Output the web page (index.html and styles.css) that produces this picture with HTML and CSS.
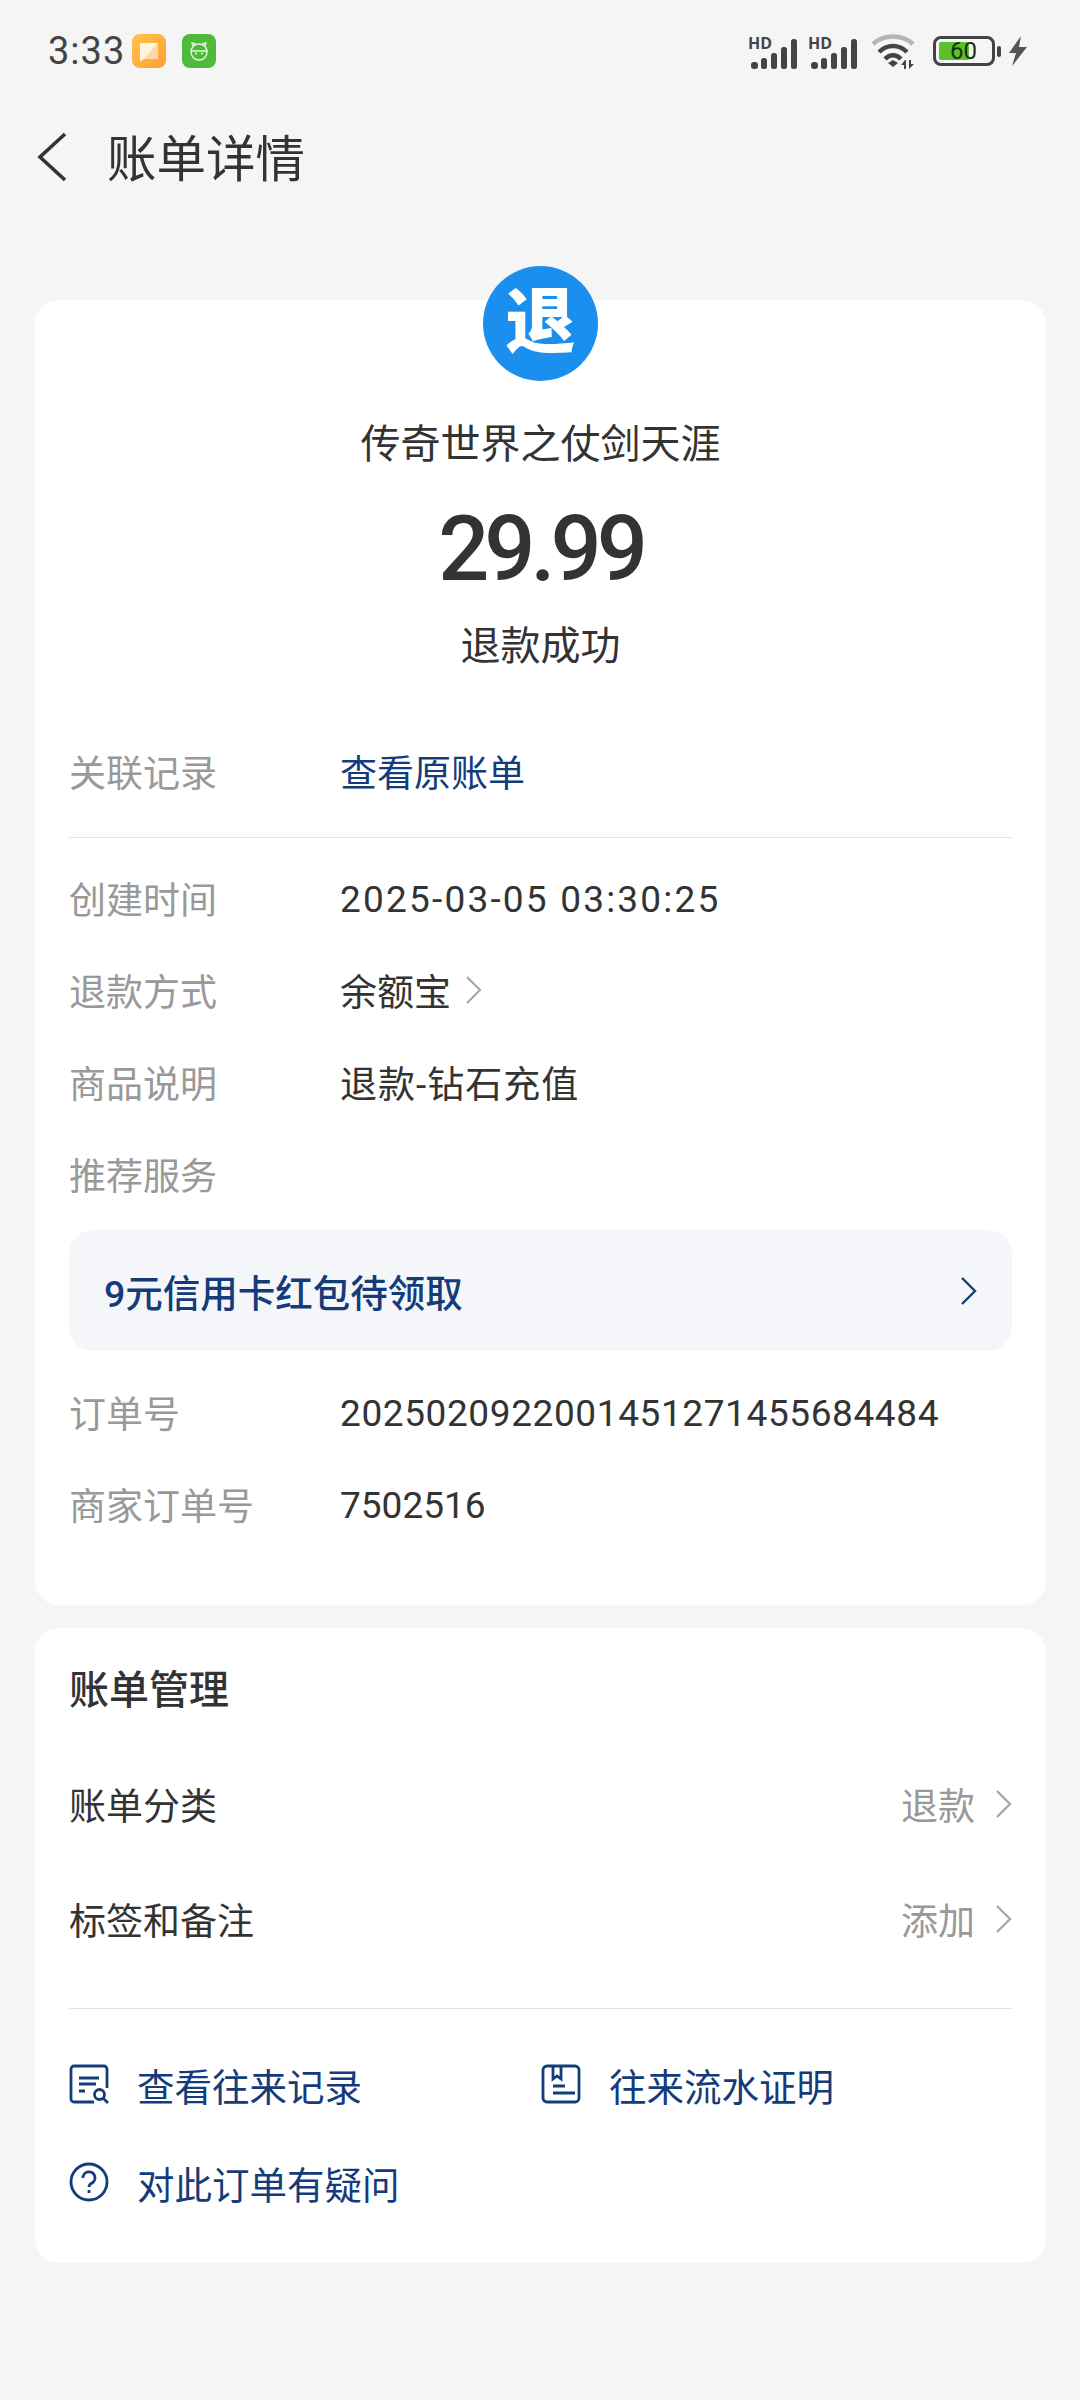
FILE: index.html
```html
<!DOCTYPE html>
<html lang="zh-CN">
<head>
  <meta charset="UTF-8" />
  <meta name="viewport" content="width=device-width, initial-scale=1.0"/>
  <title>账单详情</title>
  <link rel="stylesheet" href="styles.css">
</head>
<body>
  <div class="status-bar">
    <div class="status-left">
      <span class="clock">3:33</span>
      <svg class="app-icon" width="34" height="34" viewBox="0 0 34 34">
        <defs>
          <linearGradient id="orange" x1="0" y1="0" x2="1" y2="1">
            <stop offset="0" stop-color="#ffc44d"/>
            <stop offset="1" stop-color="#ff9f30"/>
          </linearGradient>
        </defs>
        <rect width="34" height="34" rx="8" fill="url(#orange)"/>
        <path d="M8 9h18v16H12l-4 3z" fill="#fff4e2"/>
        <path d="M26 9v16H12z" fill="#fcd9a6"/>
      </svg>
      <svg class="app-icon second" width="34" height="34" viewBox="0 0 34 34">
        <rect width="34" height="34" rx="8" fill="#4fb93a"/>
        <circle cx="17" cy="18" r="8" fill="none" stroke="#e6f7e0" stroke-width="1.4"/>
        <path d="M11 12l-1-3 4 1M23 12l1-3-4 1M9 17h16" fill="none" stroke="#e6f7e0" stroke-width="1.4"/>
        <path d="M13 19.500h2M19 19.500h2" stroke="#e6f7e0" stroke-width="1.4"/>
      </svg>
    </div>
    <div class="status-right">
      <svg width="52" height="40" viewBox="0 0 52 40">
        <text x="0" y="18" class="hd">HD</text>
        <rect x="3" y="31" width="7" height="7" rx="3" class="bar"/>
        <rect x="13" y="27" width="6" height="11" rx="2.500" class="bar"/>
        <rect x="23" y="22" width="6" height="16" rx="2.500" class="bar"/>
        <rect x="33" y="16" width="6" height="22" rx="2.500" class="bar"/>
        <rect x="43" y="8" width="6" height="30" rx="2.500" class="bar"/>
      </svg>
      <svg class="signal" width="52" height="40" viewBox="0 0 52 40">
        <text x="0" y="18" class="hd">HD</text>
        <rect x="3" y="31" width="7" height="7" rx="3" class="bar"/>
        <rect x="13" y="27" width="6" height="11" rx="2.500" class="bar"/>
        <rect x="23" y="22" width="6" height="16" rx="2.500" class="bar"/>
        <rect x="33" y="16" width="6" height="22" rx="2.500" class="bar"/>
        <rect x="43" y="8" width="6" height="30" rx="2.500" class="bar"/>
      </svg>
      <svg class="wifi" width="48" height="38" viewBox="0 0 48 38">
        <path d="M3 12C14 2 32 2 43 12" fill="none" stroke="#b5b5b5" stroke-width="4.500"/>
        <path d="M9 20C17 12 29 12 37 20M15 27C20 22 26 22 31 27" fill="none" stroke="#444" stroke-width="4.500"/>
        <path d="M18 31l5-3 5 3-5 4z" fill="#444"/>
        <path d="M35 28l-4 5h3v4h2v-9zM39 37l5-5h-3v-4h-2v9z" fill="#444"/>
      </svg>
      <div class="battery">
        <div class="battery-fill"></div>
        <span class="battery-num">60</span>
      </div>
      <div class="battery-cap"></div>
      <svg class="bolt" width="20" height="30" viewBox="0 0 20 30">
        <path d="M13 0L1 17h7l-4 13L19 11h-8z" fill="#555"/>
      </svg>
    </div>
  </div>

  <header class="topbar">
    <svg class="back" width="30" height="50" viewBox="0 0 30 50">
      <path d="M28 2L3 25l25 23" fill="none" stroke="#333" stroke-width="3.600"/>
    </svg>
    <h1>账单详情</h1>
  </header>

  <main>
    <section class="card detail">
      <div class="refund-badge">退</div>
      <div class="merchant">传奇世界之仗剑天涯</div>
      <div class="amount">29.99</div>
      <div class="state">退款成功</div>

      <div class="row first">
        <span class="label">关联记录</span>
        <span class="value link">查看原账单</span>
      </div>
      <div class="divider"></div>
      <div class="row created">
        <span class="label">创建时间</span>
        <span class="value date">2025-03-05 03:30:25</span>
      </div>
      <div class="row">
        <span class="label">退款方式</span>
        <span class="value">余额宝
          <svg class="chev" width="18" height="30" viewBox="0 0 18 30"><path d="M2 2l13 13L2 28" fill="none" stroke="#a8a8a8" stroke-width="2.200"/></svg>
        </span>
      </div>
      <div class="row">
        <span class="label">商品说明</span>
        <span class="value desc">退款-钻石充值</span>
      </div>
      <div class="row">
        <span class="label">推荐服务</span>
      </div>
      <div class="promo">
        <span>9元信用卡红包待领取</span>
        <svg width="18" height="30" viewBox="0 0 18 30"><path d="M2 2l13 13L2 28" fill="none" stroke="#143c7a" stroke-width="2.400"/></svg>
      </div>
      <div class="row order">
        <span class="label">订单号</span>
        <span class="value order-no">2025020922001451271455684484</span>
      </div>
      <div class="row">
        <span class="label">商家订单号</span>
        <span class="value digits">7502516</span>
      </div>
    </section>

    <section class="card manage">
      <h2>账单管理</h2>
      <div class="manage-row">
        <span>账单分类</span>
        <span class="manage-value">退款
          <svg width="18" height="30" viewBox="0 0 18 30"><path d="M2 2l13 13L2 28" fill="none" stroke="#a8a8a8" stroke-width="2.400"/></svg>
        </span>
      </div>
      <div class="manage-row">
        <span>标签和备注</span>
        <span class="manage-value">添加
          <svg width="18" height="30" viewBox="0 0 18 30"><path d="M2 2l13 13L2 28" fill="none" stroke="#a8a8a8" stroke-width="2.400"/></svg>
        </span>
      </div>
      <div class="divider lower"></div>
      <div class="actions">
        <a class="action">
          <svg width="40" height="40" viewBox="0 0 40 40" fill="none" stroke="#143c7a" stroke-width="2.800">
            <path d="M38 24V5a3 3 0 0 0-3-3H5a3 3 0 0 0-3 3v30a3 3 0 0 0 3 3h20"/>
            <path d="M10 14h20M10 20h17M10 27h6"/>
            <circle cx="30.500" cy="30.500" r="5"/>
            <path d="M34 34l5 5"/>
          </svg>
          查看往来记录
        </a>
        <a class="action">
          <svg width="40" height="40" viewBox="0 0 40 40" fill="none" stroke="#143c7a" stroke-width="2.800">
            <rect x="2" y="2" width="36" height="36" rx="4"/>
            <path d="M12 2v13l4-3 4 3V2M12 22h12M12 29h22"/>
          </svg>
          往来流水证明
        </a>
        <a class="action">
          <svg width="40" height="40" viewBox="0 0 40 40" fill="none" stroke="#143c7a" stroke-width="2.800">
            <circle cx="20" cy="20" r="18"/>
            <path d="M14 16a6 6 0 1 1 9 5c-2 1-3 2-3 4"/>
            <path d="M20 28v3"/>
          </svg>
          对此订单有疑问
        </a>
      </div>
    </section>
  </main>
</body>
</html>
```

FILE: styles.css
```css
* {
  box-sizing: border-box;
}

body {
  margin: 0;
  width: 1080px;
  height: 2400px;
  overflow: hidden;
  background-color: #f5f5f5;
  color: #333;
  font-family: Roboto, "Noto Sans CJK SC", sans-serif;
}

.status-bar {
  height: 100px;
  padding: 2px 52px 0 48px;
  display: flex;
  justify-content: space-between;
  align-items: center;
}

.status-left {
  display: flex;
  align-items: center;
}

.clock {
  font-size: 38px;
  line-height: 42px;
  color: #444;
  letter-spacing: 1px;
  width: 84px;
}

.app-icon.second {
  margin-left: 16px;
}

.status-right {
  display: flex;
  align-items: center;
}

.signal {
  margin-left: 8px;
}

.hd {
  font-family: "Open Sans", sans-serif;
  font-size: 16px;
  font-weight: 700;
  fill: #444;
}

.bar {
  fill: #444;
}

.wifi {
  margin-left: 10px;
}

.battery {
  position: relative;
  width: 62px;
  height: 30px;
  margin-left: 15px;
  border: 3px solid #444;
  border-radius: 8px;
  padding: 3px;
}

.battery-fill {
  width: 30px;
  height: 100%;
  background-color: #5cc02d;
  border-radius: 2px;
}

.battery-num {
  position: absolute;
  left: 14px;
  top: -3px;
  font-size: 24px;
  line-height: 30px;
  color: #14330c;
}

.battery-cap {
  width: 4px;
  height: 11px;
  margin-left: 2px;
  background-color: #444;
  border-radius: 2px;
}

.bolt {
  margin-left: 7px;
}

.topbar {
  height: 116px;
  padding-left: 37px;
  display: flex;
  align-items: center;
  margin-top: -3px;
}

.back {
  margin-top: 4px;
}

.topbar h1 {
  margin: 0 0 0 40px;
  font-size: 49.500px;
  font-weight: 400;
  color: #333;
}

main {
  padding: 0 34px 0 35px;
  margin-top: 87px;
}

.card {
  background-color: #fff;
  border-radius: 24px;
  padding: 0 34px;
}

.detail {
  height: 1305px;
  display: flex;
  flex-direction: column;
}

.refund-badge {
  width: 115px;
  height: 115px;
  margin: -34px auto 0;
  border-radius: 50%;
  background-color: #1a8fed;
  color: #fff;
  font-size: 70px;
  font-weight: 900;
  line-height: 115px;
  text-align: center;
}

.merchant {
  margin-top: 34px;
  height: 60px;
  line-height: 60px;
  font-size: 40px;
  text-align: center;
}

.amount {
  margin-top: 25px;
  height: 100px;
  line-height: 100px;
  font-size: 90px;
  font-weight: 500;
  letter-spacing: -5px;
  text-align: center;
}

.state {
  margin-top: 17px;
  height: 60px;
  line-height: 60px;
  font-size: 40px;
  text-align: center;
}

.row {
  display: flex;
  align-items: center;
  height: 92px;
  font-size: 37px;
  flex-shrink: 0;
}

.row.first {
  margin-top: 62px;
  height: 64px;
}

.row.created {
  margin-top: 14px;
}

.row.order {
  margin-top: 15px;
}

.label {
  width: 271px;
  color: #999;
  flex-shrink: 0;
}

.value {
  display: flex;
  align-items: center;
  color: #333;
}

.date {
  padding-top: 2px;
  letter-spacing: 2.200px;
}

.desc {
  letter-spacing: 1px;
}

.order-no {
  padding-top: 3px;
  letter-spacing: 0.600px;
}

.digits {
  padding-top: 3px;
}

.link {
  color: #143c7a;
}

.chev {
  margin-left: 14px;
}

.divider {
  height: 1px;
  background-color: #e4e4e4;
  flex-shrink: 0;
}

.row.first + .divider {
  margin-top: 34px;
}

.promo {
  height: 121px;
  margin-top: 10px;
  padding: 0 34px 0 35px;
  display: flex;
  align-items: center;
  justify-content: space-between;
  background-color: #f5f6fa;
  border-radius: 24px;
  color: #143c7a;
  font-size: 37.500px;
  font-weight: 500;
  flex-shrink: 0;
}

.manage {
  height: 635px;
  margin-top: 23px;
}

.manage h2 {
  margin: 0;
  padding-top: 33px;
  height: 118px;
  line-height: 60px;
  font-size: 40px;
  font-weight: 500;
  color: #333;
}

.manage-row {
  display: flex;
  justify-content: space-between;
  align-items: center;
  height: 115px;
  font-size: 37px;
}

.manage-value {
  display: flex;
  align-items: center;
  gap: 20px;
  margin-right: -1px;
  color: #999;
}

.divider.lower {
  margin-top: 32px;
}

.actions {
  display: grid;
  grid-template-columns: 472px 1fr;
  row-gap: 58px;
  margin-top: 55px;
}

.action {
  display: flex;
  align-items: center;
  gap: 28px;
  height: 40px;
  font-size: 37.500px;
  color: #143c7a;
}
```
